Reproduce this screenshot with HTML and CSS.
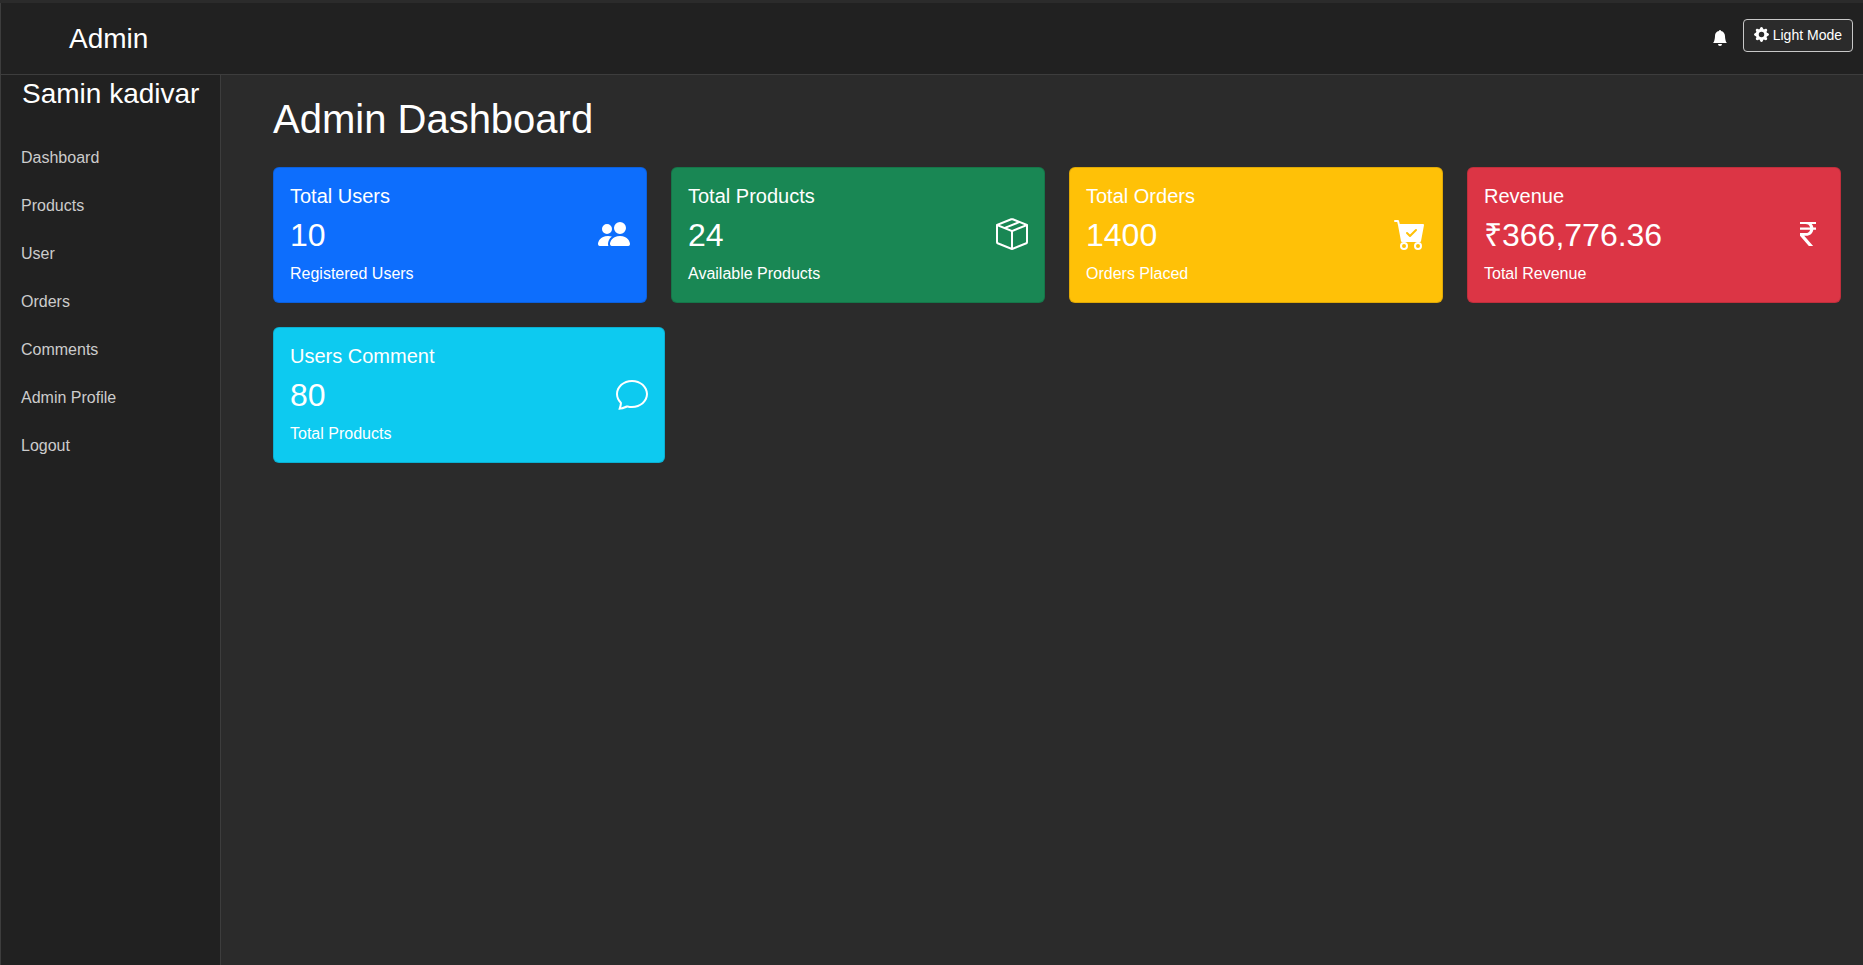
FILE: index.html
```html
<!DOCTYPE html>
<html lang="en">
<head>
    <meta charset="UTF-8">
    <meta name="viewport" content="width=device-width, initial-scale=1.0">
    <title>Admin Dashboard</title>
    <link rel="stylesheet" href="styles.css">
</head>
<body>
    <nav class="navbar">
        <span class="brand">Admin</span>
        <div class="nav-actions">
            <svg class="bell" viewBox="0 0 16 16" fill="currentColor"><path d="M8 16a2 2 0 0 0 2-2H6a2 2 0 0 0 2 2m.995-14.901a1 1 0 1 0-1.99 0A5 5 0 0 0 3 6c0 1.098-.5 6-2 7h14c-1.5-1-2-5.902-2-7 0-2.42-1.72-4.44-4.005-4.901"/></svg>
            <button class="mode-btn">
                <svg class="gear" viewBox="0 0 16 16" fill="currentColor"><path d="M9.405 1.05c-.413-1.4-2.397-1.4-2.81 0l-.1.34a1.464 1.464 0 0 1-2.105.872l-.31-.17c-1.283-.698-2.686.705-1.987 1.987l.169.311c.446.82.023 1.841-.872 2.105l-.34.1c-1.4.413-1.4 2.397 0 2.81l.34.1a1.464 1.464 0 0 1 .872 2.105l-.17.31c-.698 1.283.705 2.686 1.987 1.987l.311-.169a1.464 1.464 0 0 1 2.105.872l.1.34c.413 1.4 2.397 1.4 2.81 0l.1-.34a1.464 1.464 0 0 1 2.105-.872l.31.17c1.283.698 2.686-.705 1.987-1.987l-.169-.311a1.464 1.464 0 0 1 .872-2.105l.34-.1c1.4-.413 1.4-2.397 0-2.81l-.34-.1a1.464 1.464 0 0 1-.872-2.105l.17-.31c.698-1.283-.705-2.686-1.987-1.987l-.311.169a1.464 1.464 0 0 1-2.105-.872zM8 10.93a2.929 2.929 0 1 1 0-5.86 2.929 2.929 0 0 1 0 5.858z"/></svg>
                Light Mode
            </button>
        </div>
    </nav>
    <div class="layout">
        <aside class="sidebar">
            <h3 class="user-name">Samin kadivar</h3>
            <ul class="side-menu">
                <li><a href="#">Dashboard</a></li>
                <li><a href="#">Products</a></li>
                <li><a href="#">User</a></li>
                <li><a href="#">Orders</a></li>
                <li><a href="#">Comments</a></li>
                <li><a href="#">Admin Profile</a></li>
                <li><a href="#">Logout</a></li>
            </ul>
        </aside>
        <main class="content">
            <h1>Admin Dashboard</h1>
            <div class="card-row">
                <div class="card bg-blue">
                    <h5>Total Users</h5>
                    <div class="card-mid">
                        <span class="count">10</span>
                        <svg class="icon" viewBox="0 0 16 16" fill="currentColor"><path d="M7 14s-1 0-1-1 1-4 5-4 5 3 5 4-1 1-1 1zm4-6a3 3 0 1 0 0-6 3 3 0 0 0 0 6m-5.784 6A2.24 2.24 0 0 1 5 13c0-1.355.68-2.75 1.936-3.72A6.3 6.3 0 0 0 5 9c-4 0-5 3-5 4s1 1 1 1zM4.5 8a2.5 2.5 0 1 0 0-5 2.5 2.5 0 0 0 0 5"/></svg>
                    </div>
                    <p>Registered Users</p>
                </div>
                <div class="card bg-green">
                    <h5>Total Products</h5>
                    <div class="card-mid">
                        <span class="count">24</span>
                        <svg class="icon" viewBox="0 0 16 16" fill="currentColor"><path d="M8.186 1.113a.5.5 0 0 0-.372 0L1.846 3.5l2.404.961L10.404 2zm3.564 1.426L5.596 5 8 5.961 14.154 3.5zm3.25 1.7-6.5 2.6v7.922l6.5-2.6V4.24zM7.5 14.762V6.838L1 4.239v7.925zM7.443.184a1.5 1.5 0 0 1 1.114 0l7.129 2.852A.5.5 0 0 1 16 3.5v8.662a1 1 0 0 1-.629.928l-7.185 2.874a.5.5 0 0 1-.372 0L.63 13.09a1 1 0 0 1-.63-.928V3.5a.5.5 0 0 1 .314-.464z"/></svg>
                    </div>
                    <p>Available Products</p>
                </div>
                <div class="card bg-yellow">
                    <h5>Total Orders</h5>
                    <div class="card-mid">
                        <span class="count">1400</span>
                        <svg class="icon" viewBox="0 0 16 16" fill="currentColor"><path d="M.5 1a.5.5 0 0 0 0 1h1.11l.401 1.607 1.498 7.985A.5.5 0 0 0 4 12h1a2 2 0 1 0 0 4 2 2 0 0 0 0-4h7a2 2 0 1 0 0 4 2 2 0 0 0 0-4h1a.5.5 0 0 0 .491-.408l1.5-8A.5.5 0 0 0 14.5 3H2.89l-.405-1.621A.5.5 0 0 0 2 1zM6 14a1 1 0 1 1-2 0 1 1 0 0 1 2 0m7 0a1 1 0 1 1-2 0 1 1 0 0 1 2 0m-1.646-7.646-3 3a.5.5 0 0 1-.708 0l-1.5-1.5a.5.5 0 1 1 .708-.708L8 8.293l2.646-2.647a.5.5 0 0 1 .708.708"/></svg>
                    </div>
                    <p>Orders Placed</p>
                </div>
                <div class="card bg-red">
                    <h5>Revenue</h5>
                    <div class="card-mid">
                        <span class="count">₹366,776.36</span>
                        <svg class="icon" viewBox="0 0 16 16" fill="currentColor"><path d="M4 3.06h2.726c1.22 0 2.12.575 2.325 1.724H4v1.051h5.051C8.855 7.001 8 7.558 6.788 7.558H4v1.317L8.437 14h2.11L6.095 8.884h.855c2.316-.018 3.465-1.476 3.688-3.049H12V4.784h-1.345c-.08-.778-.357-1.335-.793-1.732H12V2H4z"/></svg>
                    </div>
                    <p>Total Revenue</p>
                </div>
            </div>
            <div class="card-row">
                <div class="card card-wide bg-cyan">
                    <h5>Users Comment</h5>
                    <div class="card-mid">
                        <span class="count">80</span>
                        <svg class="icon" viewBox="0 0 16 16" fill="currentColor"><path d="M2.678 11.894a1 1 0 0 1 .287.801 11 11 0 0 1-.398 2c1.395-.323 2.247-.697 2.634-.893a1 1 0 0 1 .71-.074A8 8 0 0 0 8 14c3.996 0 7-2.807 7-6s-3.004-6-7-6-7 2.808-7 6c0 1.468.617 2.83 1.678 3.894m-.493 3.905a22 22 0 0 1-.713.129c-.2.032-.352-.176-.273-.362a10 10 0 0 0 .244-.637l.003-.01c.248-.72.45-1.548.524-2.319C.743 11.37 0 9.76 0 8c0-3.866 3.582-7 8-7s8 3.134 8 7-3.582 7-8 7a9 9 0 0 1-2.347-.306c-.52.263-1.639.742-3.468 1.105"/></svg>
                    </div>
                    <p>Total Products</p>
                </div>
            </div>
        </main>
    </div>
</body>
</html>
```

FILE: styles.css
```css
/* General Page Styling */
* {
    box-sizing: border-box;
}

body {
    font-family: "Liberation Sans", Arial, sans-serif;
    background: #2b2b2b;
    margin: 0;
    height: 965px;
    overflow: hidden;
    color: #fff;
    display: flex;
    flex-direction: column;
}

/* Navbar */
.navbar {
    height: 72px;
    flex-shrink: 0;
    margin-top: 3px;
    padding: 0 10px 0 68px;
    display: flex;
    justify-content: space-between;
    align-items: center;
    background: #212121;
    border: 1px solid #3d3d3d;
    border-width: 0 0 1px 1px;
}

.brand {
    font-size: 28px;
}

.nav-actions {
    display: flex;
    align-items: flex-start;
    gap: 15px;
    margin-bottom: 6px;
}

.bell {
    width: 16px;
    height: 16px;
    margin-top: 11px;
}

.mode-btn {
    display: flex;
    align-items: center;
    gap: 4px;
    height: 33px;
    padding: 0 10px 2px;
    font-family: inherit;
    font-size: 14px;
    color: #fff;
    background: #2b2b2b;
    border: 1px solid #c8c8c8;
    border-radius: 4px;
}

.gear {
    width: 15px;
    height: 15px;
}

/* Sidebar */
.layout {
    flex: 1;
    display: flex;
    min-height: 0;
}

.sidebar {
    width: 221px;
    flex-shrink: 0;
    background: #212121;
    border: 1px solid #3d3d3d;
    border-width: 0 1px 0 1px;
    padding: 2px 0 0 20px;
}

.user-name {
    margin: 0 0 23px;
    padding-left: 1px;
    font-size: 28px;
    font-weight: 400;
    line-height: 34px;
}

.side-menu {
    list-style: none;
    margin: 0;
    padding: 0;
}

.side-menu a {
    display: block;
    height: 48px;
    line-height: 48px;
    font-size: 16px;
    color: #ccc;
    text-decoration: none;
}

/* Main Content */
.content {
    flex: 1;
    min-width: 0;
    padding: 20px 22px 0 52px;
}

h1 {
    margin: 0 0 24px;
    font-size: 40px;
    font-weight: 400;
    line-height: 48px;
}

.card-row {
    display: flex;
    gap: 24px;
    margin-bottom: 24px;
}

/* Cards */
.card {
    flex: 1;
    height: 136px;
    padding: 16px;
    border-radius: 6px;
    border: 1px solid rgba(0, 0, 0, 0.125);
}

.card-wide {
    flex: 0 0 392px;
}

.card h5 {
    margin: 0;
    font-size: 20px;
    font-weight: 400;
    line-height: 24px;
}

.card-mid {
    display: flex;
    justify-content: space-between;
    align-items: center;
    margin-top: 8px;
    height: 38px;
}

.count {
    font-size: 32px;
    line-height: 38px;
}

.icon {
    width: 32px;
    height: 32px;
    margin-bottom: 2px;
}

.card p {
    margin: 8px 0 0;
    font-size: 16px;
    line-height: 24px;
}

.bg-blue { background: #0d6efd; }
.bg-green { background: #198754; }
.bg-yellow { background: #ffc107; }
.bg-red { background: #dc3545; }
.bg-cyan { background: #0dcaf0; }
```
